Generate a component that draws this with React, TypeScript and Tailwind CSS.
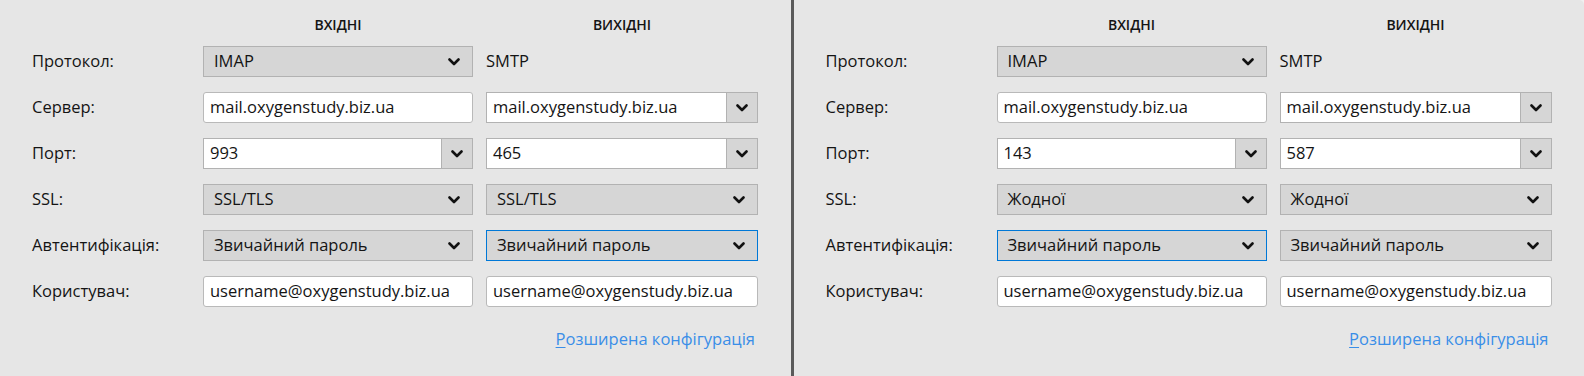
import React from "react";

type Side = {
  protocol: string;
  server: string;
  port: string;
  ssl: string;
  auth: string;
  user: string;
};

type PanelData = {
  incoming: Side;
  outgoing: Side;
  focus: "incoming" | "outgoing";
};

const panels: PanelData[] = [
  {
    incoming: { protocol: "IMAP", server: "mail.oxygenstudy.biz.ua", port: "993", ssl: "SSL/TLS", auth: "Звичайний пароль", user: "username@oxygenstudy.biz.ua" },
    outgoing: { protocol: "SMTP", server: "mail.oxygenstudy.biz.ua", port: "465", ssl: "SSL/TLS", auth: "Звичайний пароль", user: "username@oxygenstudy.biz.ua" },
    focus: "outgoing",
  },
  {
    incoming: { protocol: "IMAP", server: "mail.oxygenstudy.biz.ua", port: "143", ssl: "Жодної", auth: "Звичайний пароль", user: "username@oxygenstudy.biz.ua" },
    outgoing: { protocol: "SMTP", server: "mail.oxygenstudy.biz.ua", port: "587", ssl: "Жодної", auth: "Звичайний пароль", user: "username@oxygenstudy.biz.ua" },
    focus: "incoming",
  },
];

function Chevron() {
  return (
    <svg width="12" height="8" viewBox="0 0 12 8" fill="none">
      <path d="M1.5 1.5L6 6L10.5 1.5" stroke="#111" strokeWidth="2.6" strokeLinecap="round" strokeLinejoin="round" />
    </svg>
  );
}

function Select({ value, focused }: { value: string; focused?: boolean }) {
  return (
    <div
      className={`h-[31px] flex items-center justify-between pl-[10px] pr-[12px] bg-[#d6d6d6] border ${
        focused ? "border-[#0078d7]" : "border-[#b2b2b2]"
      }`}
    >
      <span>{value}</span>
      <Chevron />
    </div>
  );
}

function Input({ value }: { value: string }) {
  return (
    <div className="h-[31px] flex items-center px-[6px] bg-white border border-[#b9b9b9] rounded-[3px]">
      {value}
    </div>
  );
}

function Combo({ value }: { value: string }) {
  return (
    <div className="h-[31px] flex border border-[#b2b2b2] bg-white">
      <div className="flex-1 flex items-center px-[6px]">{value}</div>
      <div className="w-[31px] flex items-center justify-center bg-[#d6d6d6] border-l border-[#b2b2b2]">
        <Chevron />
      </div>
    </div>
  );
}

function Label({ children }: { children: React.ReactNode }) {
  return <div className="h-[31px] flex items-center">{children}</div>;
}

function Panel({ data, rounded }: { data: PanelData; rounded?: boolean }) {
  const { incoming, outgoing, focus } = data;
  return (
    <div className={`flex-1 h-[376px] bg-[#e6e6e6] pl-8 pt-[17px] ${rounded ? "rounded-tr-[5px]" : ""}`}>
      <div className="grid grid-cols-[158px_270px_272px] gap-x-[13px] gap-y-[15px] text-[16.5px] text-[#141414]">
        <div className="h-[14px]" />
        <div className="h-[14px] flex items-center justify-center text-[14px] font-semibold">ВХІДНІ</div>
        <div className="h-[14px] flex items-center justify-center text-[14px] font-semibold">ВИХІДНІ</div>

        <Label>Протокол:</Label>
        <Select value={incoming.protocol} />
        <Label>{outgoing.protocol}</Label>

        <Label>Сервер:</Label>
        <Input value={incoming.server} />
        <Combo value={outgoing.server} />

        <Label>Порт:</Label>
        <Combo value={incoming.port} />
        <Combo value={outgoing.port} />

        <Label>SSL:</Label>
        <Select value={incoming.ssl} />
        <Select value={outgoing.ssl} />

        <Label>Автентифікація:</Label>
        <Select value={incoming.auth} focused={focus === "incoming"} />
        <Select value={outgoing.auth} focused={focus === "outgoing"} />

        <Label>Користувач:</Label>
        <Input value={incoming.user} />
        <Input value={outgoing.user} />

        <div />
        <div />
        <div className="flex justify-end pr-[3px] pt-[5px] text-[#3a8ee8]">
          <span>
            <span className="underline underline-offset-2">Р</span>озширена конфігурація
          </span>
        </div>
      </div>
    </div>
  );
}

export default function App() {
  return (
    <div className="w-[1584px] h-[376px] flex bg-[#f0f0f0] font-['Open_Sans',sans-serif] overflow-hidden">
      <Panel data={panels[0]} />
      <div className="w-[3px] bg-[#5a5a5a]" />
      <Panel data={panels[1]} rounded />
    </div>
  );
}
